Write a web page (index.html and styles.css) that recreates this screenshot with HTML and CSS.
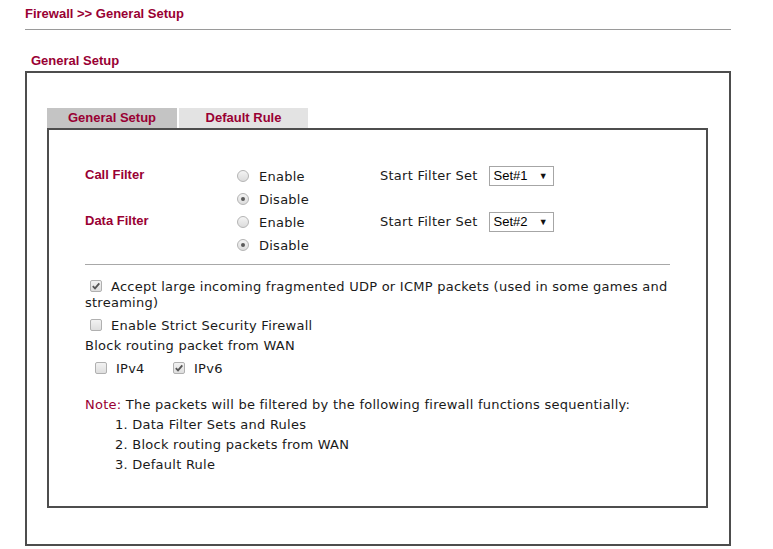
FILE: index.html
```html
<!DOCTYPE html>
<html>
<head>
<meta charset="utf-8">
<link rel="stylesheet" href="styles.css">
</head>
<body>
<div class="page">
  <div class="crumb">Firewall &gt;&gt; General Setup</div>
  <div class="section-title">General Setup</div>
  <div class="outer">
    <div class="tabs">
      <div class="tab active">General Setup</div>
      <div class="tab">Default Rule</div>
    </div>
    <div class="inner">
      <div class="filters">
        <div class="label l1">Call Filter</div>
        <div class="opt r1"><span class="radio"></span>Enable</div>
        <div class="set r1">Start Filter Set <span class="select">Set#1<span class="arrow">▼</span></span></div>
        <div class="opt r2"><span class="radio on"></span>Disable</div>
        <div class="label l2">Data Filter</div>
        <div class="opt r3"><span class="radio"></span>Enable</div>
        <div class="set r3">Start Filter Set <span class="select">Set#2<span class="arrow">▼</span></span></div>
        <div class="opt r4"><span class="radio on"></span>Disable</div>
      </div>
      <div class="divider"></div>
      <p class="accept"><span class="cb on"><svg viewBox="0 0 12 12" width="12" height="12"><path d="M2.8 6.2 L5 8.4 L9.3 3.4" fill="none" stroke="#555" stroke-width="1.8"/></svg></span>Accept large incoming fragmented UDP or ICMP packets (used in some games and<br>streaming)</p>
      <p class="line"><span class="cb"></span>Enable Strict Security Firewall</p>
      <p class="line">Block routing packet from WAN</p>
      <p class="line ip">
        <span class="ipitem"><span class="cb"></span>IPv4</span>
        <span class="ipitem"><span class="cb on"><svg viewBox="0 0 12 12" width="12" height="12"><path d="M2.8 6.2 L5 8.4 L9.3 3.4" fill="none" stroke="#555" stroke-width="1.8"/></svg></span>IPv6</span>
      </p>
      <p class="line note"><span class="note-label">Note:</span> The packets will be filtered by the following firewall functions sequentially:</p>
      <p class="line item">1. Data Filter Sets and Rules</p>
      <p class="line item">2. Block routing packets from WAN</p>
      <p class="line item">3. Default Rule</p>
    </div>
  </div>
</div>
</body>
</html>
```
FILE: styles.css
```css
html, body {
  margin: 0;
  padding: 0;
  background: #fff;
}
body {
  font-family: "DejaVu Sans", Verdana, sans-serif;
  font-size: 13px;
  letter-spacing: 0.25px;
  color: #1a1a1a;
}
.page {
  margin-left: 25px;
  width: 706px;
}
.crumb {
  font-family: "Liberation Sans", Arial, sans-serif;
  font-weight: bold;
  font-size: 13px;
  letter-spacing: 0;
  color: #990033;
  line-height: 16px;
  padding-top: 6px;
  padding-bottom: 7px;
  border-bottom: 1px solid #9a9a9a;
}
.section-title {
  font-family: "Liberation Sans", Arial, sans-serif;
  font-weight: bold;
  font-size: 13px;
  letter-spacing: 0;
  color: #990033;
  line-height: 16px;
  margin-top: 23px;
  margin-bottom: 2px;
  padding-left: 6px;
}
.outer {
  border: 2px solid #4d4d4d;
  padding: 35px 21px 36px 20px;
  height: 475px;
  box-sizing: border-box;
}
.tabs {
  display: flex;
  gap: 2px;
  height: 20px;
}
.tab {
  width: 129px;
  background: #e3e3e3;
  font-family: "Liberation Sans", Arial, sans-serif;
  font-weight: bold;
  font-size: 13px;
  letter-spacing: 0;
  color: #990033;
  line-height: 20px;
  text-align: center;
}
.tab.active {
  width: 130px;
  background: #c4c4c4;
}
.inner {
  border: 2px solid #4d4d4d;
  height: 380px;
  box-sizing: border-box;
  padding: 35px 36px 0 36px;
}
.filters {
  display: grid;
  grid-template-columns: 152px 143px auto;
  grid-template-rows: repeat(4, 23px);
}
.label {
  font-family: "Liberation Sans", Arial, sans-serif;
  font-weight: bold;
  font-size: 13px;
  letter-spacing: 0;
  color: #990033;
  grid-column: 1;
  line-height: 16px;
  padding-top: 2px;
}
.l1 { grid-row: 1 / 3; }
.l2 { grid-row: 3 / 5; }
.opt {
  grid-column: 2;
  display: flex;
  align-items: center;
  line-height: 16px;
  padding-top: 1px;
}
.r1 { grid-row: 1; }
.r2 { grid-row: 2; }
.r3 { grid-row: 3; }
.r4 { grid-row: 4; }
.set {
  grid-column: 3;
  display: flex;
  align-items: center;
  line-height: 16px;
  margin-top: -2px;
}
.radio {
  width: 12px;
  height: 12px;
  box-sizing: border-box;
  border: 1px solid #b4b4b4;
  border-radius: 50%;
  background: linear-gradient(#f4f4f4, #dcdcdc);
  margin-right: 10px;
  margin-top: -3px;
  display: inline-flex;
  align-items: center;
  justify-content: center;
}
.radio.on::after {
  content: "";
  width: 4px;
  height: 4px;
  border-radius: 50%;
  background: #5a5a5a;
}
.select {
  display: inline-flex;
  align-items: center;
  justify-content: space-between;
  box-sizing: border-box;
  width: 65px;
  height: 20px;
  margin-left: 11px;
  padding: 0 5px 0 4px;
  border: 1px solid #a6a6a6;
  font-family: "Liberation Sans", Arial, sans-serif;
  font-size: 13px;
  letter-spacing: 0;
  color: #000;
  background: #fff;
}
.arrow {
  font-size: 9px;
  color: #111;
}
.divider {
  height: 1px;
  background: #a8a8a8;
  margin-top: 7px;
}
p {
  margin: 0;
}
.accept {
  line-height: 16px;
  margin-top: 14px;
  margin-bottom: 5px;
  margin-right: -20px;
  white-space: nowrap;
}
.line {
  line-height: 20px;
}
.cb {
  display: inline-flex;
  vertical-align: -1px;
  width: 12px;
  height: 12px;
  box-sizing: border-box;
  border: 1px solid #b0b0b0;
  border-radius: 2px;
  background: linear-gradient(#f2f2f2, #dedede);
  margin-left: 5px;
  margin-right: 9px;
  overflow: hidden;
}
.cb svg {
  margin: -1px;
}
.ip {
  margin-top: 3px;
  padding-left: 5px;
}
.ipitem {
  margin-right: 19px;
}
.note {
  margin-top: 16px;
}
.note-label {
  color: #990033;
}
.item {
  padding-left: 30px;
}
```
